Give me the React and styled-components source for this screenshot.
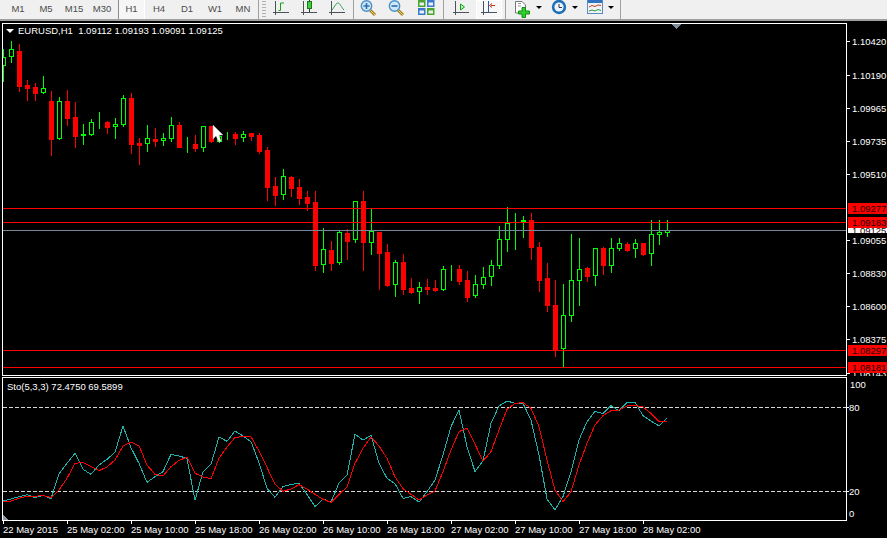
import styled, { createGlobalStyle } from "styled-components";

const GlobalStyle = createGlobalStyle`
  html, body {
    margin: 0;
    padding: 0;
    background: #000;
    overflow: hidden;
  }
`;

const FONT = `"Liberation Sans", Arial, sans-serif`;

// [high, low, bodyTop, bodyBottom, colour] per bar, one bar every 8px from x=3
const CANDLES = [
  [49, 81, 57, 65, "g"], [41, 62, 49, 56, "g"], [44, 91, 51, 86, "r"], [80, 100, 85, 88, "r"],
  [83, 100, 87, 93, "r"], [76, 93, 88, 92, "g"], [91, 155, 101, 139, "r"], [97, 139, 101, 138, "g"],
  [90, 125, 101, 118, "r"], [102, 147, 117, 136, "r"], [124, 144, 134, 135, "g"], [119, 135, 122, 134, "g"],
  [112, 128, 122, 122, "g"], [121, 133, 122, 127, "r"], [118, 138, 124, 126, "g"], [95, 126, 98, 124, "g"],
  [93, 153, 98, 144, "r"], [138, 164, 143, 145, "r"], [125, 151, 138, 143, "g"], [128, 146, 139, 141, "r"],
  [133, 145, 138, 140, "g"], [117, 141, 125, 138, "g"], [122, 147, 125, 147, "r"], [137, 152, 145, 145, "g"],
  [135, 151, 144, 148, "r"], [126, 151, 126, 147, "g"], [126, 142, 126, 141, "r"], [132, 142, 136, 141, "g"],
  [132, 139, 134, 134, "g"], [132, 144, 134, 138, "r"], [131, 141, 134, 137, "g"], [133, 140, 133, 136, "r"],
  [133, 153, 135, 151, "r"], [147, 200, 150, 187, "r"], [177, 205, 186, 195, "r"], [169, 199, 176, 194, "g"],
  [176, 196, 177, 188, "r"], [179, 204, 187, 198, "r"], [191, 210, 197, 203, "r"], [191, 270, 202, 265, "r"],
  [228, 272, 249, 264, "g"], [241, 270, 250, 263, "r"], [231, 264, 232, 262, "g"], [229, 259, 233, 241, "r"],
  [201, 242, 201, 239, "g"], [191, 270, 201, 242, "r"], [209, 254, 231, 242, "g"], [232, 289, 232, 253, "r"],
  [244, 286, 252, 285, "r"], [260, 296, 262, 284, "g"], [254, 294, 262, 289, "r"], [278, 293, 288, 292, "r"],
  [282, 303, 287, 291, "g"], [279, 294, 287, 289, "r"], [280, 291, 288, 290, "r"], [266, 290, 269, 289, "g"],
  [265, 280, 269, 269, "g"], [265, 284, 269, 281, "r"], [271, 301, 280, 297, "r"], [275, 297, 284, 295, "g"],
  [267, 288, 277, 284, "g"], [260, 285, 265, 276, "g"], [226, 268, 239, 265, "g"], [207, 251, 223, 239, "g"],
  [213, 249, 221, 221, "g"], [216, 237, 220, 222, "f"], [213, 259, 220, 247, "r"], [242, 291, 247, 280, "r"],
  [263, 311, 278, 305, "r"], [280, 356, 305, 350, "r"], [284, 367, 315, 348, "g"], [234, 321, 280, 315, "g"],
  [238, 305, 269, 280, "g"], [267, 281, 268, 276, "r"], [248, 285, 248, 275, "g"], [247, 274, 248, 265, "r"],
  [238, 272, 248, 265, "g"], [238, 250, 243, 248, "g"], [242, 251, 244, 250, "r"], [239, 257, 243, 248, "g"],
  [243, 255, 243, 254, "r"], [220, 265, 234, 253, "g"], [220, 244, 232, 234, "g"], [220, 236, 230, 232, "g"],
];

const TEAL = [
  378, 372, 365, 359, 368, 361, 371, 297, 265, 235, 283, 298, 270, 253, 232, 153, 218, 265, 322, 305, 290,
  238, 243, 250, 376, 290, 268, 186, 199, 168, 183, 200, 263, 340, 367, 335, 328, 325, 358, 395, 372, 381,
  324, 300, 178, 195, 181, 265, 310, 326, 370, 365, 381, 350, 315, 240, 155, 105, 215, 290, 258, 145, 93,
  78, 85, 85, 135, 240, 372, 404, 365, 290, 195, 140, 109, 116, 92, 107, 82, 82, 122, 138, 153, 129,
];

const SIGNAL = [
  381, 378, 370, 364, 364, 361, 368, 345, 310, 265, 262, 274, 287, 276, 255, 213, 202, 212, 270, 298, 303,
  275, 256, 247, 295, 306, 311, 250, 216, 187, 185, 185, 228, 277, 328, 349, 342, 329, 342, 358, 373, 382,
  358, 336, 265, 220, 186, 213, 250, 305, 341, 358, 375, 360, 348, 290, 225, 170, 160, 208, 258, 230, 165,
  103, 85, 83, 100, 155, 255, 345, 380, 350, 270, 205, 150, 122, 107, 105, 93, 91, 96, 115, 139, 139,
];

const PRICE_TICKS = [
  ["1.10420", 41], ["1.10190", 75], ["1.09965", 108], ["1.09735", 141], ["1.09510", 174],
  ["1.09055", 240], ["1.08830", 273], ["1.08600", 306], ["1.08375", 339], ["1.08143", 373],
];

const TAGS = [
  ["1.09125", 230, "#ffffff", 7],
  ["1.09277", 208, "#ff0000", 10],
  ["1.09183", 222, "#ff0000", 10],
  ["1.08297", 350, "#ff0000", 10],
  ["1.08181", 367, "#ff0000", 10],
];

const TIMES = [
  "22 May 2015", "25 May 02:00", "25 May 10:00", "25 May 18:00", "26 May 02:00", "26 May 10:00",
  "26 May 18:00", "27 May 02:00", "27 May 10:00", "27 May 18:00", "28 May 02:00",
];

const Page = styled.div`
  width: 887px;
  height: 538px;
  display: flex;
  flex-direction: column;
  background: #000;
  font-family: ${FONT};
  overflow: hidden;
`;

const Toolbar = styled.div`
  height: 19px;
  flex: none;
  display: flex;
  align-items: stretch;
  padding-left: 4px;
  background: #f0f0f0;
  border-bottom: 2px solid #a0a0a0;
`;

const Period = styled.div`
  width: ${(p) => (p.$active ? "25px" : "28px")};
  margin-left: ${(p) => (p.$active ? "2px" : "0")};
  padding-bottom: 3px;
  box-sizing: content-box;
  height: 16px;
  display: flex;
  align-items: center;
  justify-content: center;
  font-size: 9.5px;
  color: #4c4c4c;
  background: ${(p) => (p.$active ? "#f6f6f6" : "transparent")};
  border-left: ${(p) => (p.$active ? "1px solid #8c8c8c" : "none")};
  border-right: ${(p) => (p.$active ? "1px solid #fff" : "none")};
`;

const Separator = styled.div`
  width: 1px;
  flex: none;
  margin-left: ${(p) => p.$before}px;
  margin-right: ${(p) => p.$after}px;
  background: #a0a0a0;
`;

const Grip = styled.div`
  width: 4px;
  margin: 1px 1px 2px 3px;
  background: repeating-linear-gradient(#b0b0b0 0 1px, transparent 1px 3px);
`;

const ToolButton = styled.div`
  width: ${(p) => (p.$pressed ? "26px" : "28px")};
  margin: ${(p) => (p.$pressed ? "0 1px" : "0")};
  display: flex;
  align-items: flex-start;
  justify-content: center;
  background: ${(p) => (p.$pressed ? "#f8f8f8" : "transparent")};
  box-shadow: ${(p) => (p.$pressed ? "inset 0 0 0 1px #fff" : "none")};
`;

const DropButton = styled.div`
  width: 36px;
  padding-left: 4px;
  box-sizing: border-box;
  display: flex;
  align-items: flex-start;
`;

const DropIcon = styled.div`
  width: 22px;
  display: flex;
  justify-content: center;
`;

const Caret = styled.div`
  width: 0;
  height: 0;
  margin: 6px 0 0 2px;
  border-left: 3px solid transparent;
  border-right: 3px solid transparent;
  border-top: 3px solid #000;
`;

const ChartWindow = styled.div`
  flex: 1;
  display: flex;
  flex-direction: column;
  padding-top: 2px;
`;

const Pane = styled.div`
  position: relative;
  flex: none;
  height: ${(p) => p.$height}px;
  margin-bottom: ${(p) => p.$gap || 0}px;
`;

const PaneSvg = styled.svg`
  display: block;
  width: 887px;
  height: 100%;
`;

const Legend = styled.div`
  position: absolute;
  top: ${(p) => p.$top}px;
  left: ${(p) => p.$left}px;
  display: flex;
  align-items: center;
  gap: 4px;
  font-size: 9.5px;
  line-height: 11px;
  color: #fff;
  white-space: pre;
`;

const LegendMark = styled.span`
  width: 0;
  height: 0;
  border-left: 4px solid transparent;
  border-right: 4px solid transparent;
  border-top: 4px solid #fff;
`;

const AxisText = styled.text`
  font-family: ${FONT};
  font-size: 9.5px;
  fill: ${(p) => p.$fill || "#fff"};
`;

const TimeAxis = styled.div`
  display: flex;
  padding-left: 3px;
`;

const TimeCell = styled.div`
  width: 64px;
  flex: none;
  font-size: 9.5px;
  line-height: 11px;
  color: #fff;
  white-space: nowrap;
  text-indent: -0.6px;

  &::before {
    content: "";
    display: block;
    width: 1px;
    height: 3px;
    background: #fff;
  }
`;

const Axes = () => (
  <g stroke="#4a5458" strokeWidth="1" fill="none">
    <path d="M4.5 1V15M2 12.5H18" />
  </g>
);

const BarIcon = () => (
  <svg width="20" height="16" viewBox="0 0 20 16">
    <Axes />
    <path d="M7.5 10.5H9.5V3H13" stroke="#16a016" fill="none" />
  </svg>
);

const CandleIcon = () => (
  <svg width="20" height="16" viewBox="0 0 20 16">
    <Axes />
    <path d="M10.5 0V12" stroke="#333" />
    <rect x="8.5" y="1.5" width="4" height="7" fill="#3fd03f" stroke="#1a7a1a" />
  </svg>
);

const LineIcon = () => (
  <svg width="20" height="16" viewBox="0 0 20 16">
    <Axes />
    <path d="M5 10C8 6 9 3 11 3C13 3 14 7 17 10" stroke="#2c9a4a" fill="none" />
  </svg>
);

const ScrollIcon = () => (
  <svg width="20" height="16" viewBox="0 0 20 16">
    <Axes />
    <path d="M9.5 4V10L13.5 7Z" fill="#b8f0b8" stroke="#16a016" />
  </svg>
);

const ShiftIcon = () => (
  <svg width="20" height="16" viewBox="0 0 20 16">
    <Axes />
    <path d="M9.5 1V13" stroke="#2a5a9a" />
    <path d="M16 5.5H12M13 3.5L10.5 5.5L13 7.5" stroke="#c83010" fill="none" />
  </svg>
);

const Magnifier = ({ sign }) => (
  <svg width="20" height="17" viewBox="0 0 20 17">
    <path d="M9.5 9.5L15 15" stroke="#a08020" strokeWidth="3" />
    <path d="M10 10L15 15" stroke="#f0d060" />
    <circle cx="6.5" cy="6" r="5.2" fill="#cfe6f7" stroke="#4a90c8" strokeWidth="1.4" />
    <path d={sign === "+" ? "M3.5 6H9.5M6.5 3V9" : "M3.5 6H9.5"} stroke="#2a70b0" strokeWidth="1.6" />
  </svg>
);

const TileIcon = () => (
  <svg width="17" height="16" viewBox="0 0 17 16">
    {[
      [0, 0, "#4aa52e"],
      [9, 0, "#3a78d0"],
      [0, 8, "#3a78d0"],
      [9, 8, "#4aa52e"],
    ].map(([x, y, c]) => (
      <g key={`${x}-${y}`}>
        <rect x={x} y={y} width="7.5" height="7" fill={c} />
        <rect x={x + 1.5} y={y + 2.5} width="4.5" height="3" fill="#e8f0f0" />
      </g>
    ))}
  </svg>
);

const NewOrderIcon = () => (
  <svg width="18" height="18" viewBox="0 0 18 18">
    <path d="M1.5 1.5H8L11.5 5V13H1.5Z" fill="#fff" stroke="#777" />
    <path d="M4 3.5H7M4 6H7" stroke="#999" />
    <path d="M8 7.5H11.5V11H15.5V14H11.5V17.5H8V14H4.5V11H8Z" fill="#2dd02d" stroke="#158a15" />
  </svg>
);

const ClockIcon = () => (
  <svg width="18" height="16" viewBox="0 0 18 16">
    <circle cx="9" cy="7" r="7.2" fill="#1d6fb8" />
    <circle cx="9" cy="7" r="4.6" fill="#eef5fa" />
    <path d="M9 4V7.5H12" stroke="#334" fill="none" />
  </svg>
);

const TemplateIcon = () => (
  <svg width="17" height="15" viewBox="0 0 17 15">
    <rect x="0.5" y="0.5" width="15" height="13" fill="#eef3f8" stroke="#5a8ac0" />
    <rect x="1" y="0" width="14" height="3" fill="#2f72c0" />
    <path d="M2 7L5 5.5L8 6.5L11 5L14 5.5" stroke="#c83a20" fill="none" />
    <path d="M2 11L5 10L8 11L11 9.5L14 10.5" stroke="#2f9a3a" fill="none" />
  </svg>
);

const PERIODS = ["M1", "M5", "M15", "M30", "H1", "H4", "D1", "W1", "MN"];

const toPoints = (values) => values.map((v, i) => `${3 + 8 * i},${375 + v / 3}`).join(" ");

const Candle = ({ candle, x }) => {
  const [high, low, top, bottom, kind] = candle;
  const colour = kind === "r" ? "#ff0000" : "#00ff00";
  const solid = kind !== "g";
  return (
    <g>
      <rect x={x} y={high} width="1" height={low - high + 1} fill={colour} />
      {solid ? (
        <rect x={x - 2} y={top} width="5" height={bottom - top + 1} fill={colour} />
      ) : (
        <rect x={x - 1.5} y={top + 0.5} width="4" height={bottom - top} fill="#000" stroke={colour} />
      )}
    </g>
  );
};

const App = () => {
  return (
    <Page>
      <GlobalStyle />
      <Toolbar>
        {PERIODS.map((p) => (
          <Period key={p} $active={p === "H1"}>
            {p}
          </Period>
        ))}
        <Separator $before={1} $after={0} />
        <Grip />
        <ToolButton><BarIcon /></ToolButton>
        <ToolButton><CandleIcon /></ToolButton>
        <ToolButton><LineIcon /></ToolButton>
        <Separator $before={2} $after={2} />
        <ToolButton><Magnifier sign="+" /></ToolButton>
        <ToolButton><Magnifier sign="-" /></ToolButton>
        <ToolButton><TileIcon /></ToolButton>
        <Separator $before={3} $after={3} />
        <ToolButton><ScrollIcon /></ToolButton>
        <ToolButton $pressed><ShiftIcon /></ToolButton>
        <Separator $before={2} $after={2} />
        <DropButton><DropIcon><NewOrderIcon /></DropIcon><Caret /></DropButton>
        <DropButton><DropIcon><ClockIcon /></DropIcon><Caret /></DropButton>
        <DropButton><DropIcon><TemplateIcon /></DropIcon><Caret /></DropButton>
        <Separator $before={4} $after={0} />
      </Toolbar>

      <ChartWindow>
        <Pane $height={353} $gap={1}>
          <PaneSvg viewBox="0 23 887 353" shapeRendering="crispEdges">
            <defs>
              <clipPath id="plot">
                <rect x="3" y="24" width="843" height="351" />
              </clipPath>
            </defs>
            <g clipPath="url(#plot)">
              {CANDLES.map((c, i) => (
                <Candle key={i} candle={c} x={3 + 8 * i} />
              ))}
              {[208, 222, 350, 367].map((y) => (
                <rect key={y} x="3" y={y} width="843" height="1" fill="#ff0000" />
              ))}
              <rect x="3" y="230" width="843" height="1" fill="#778899" />
            </g>
            <path d="M2.5 23.5H846.5V375.5H2.5Z" fill="none" stroke="#fff" />
            <path d="M671 24H681L676 29Z" fill="#7f8c9c" />
            {PRICE_TICKS.map(([label, y]) => (
              <g key={label}>
                <rect x="847" y={y} width="3" height="1" fill="#fff" />
                <AxisText x="852" y={y + 3.5}>{label}</AxisText>
              </g>
            ))}
            {TAGS.map(([label, y, fill, h]) => (
              <g key={label}>
                <rect x="848" y={y - 5} width="39" height={h + 1} fill={fill} />
                <AxisText x="852" y={y + 3.5} $fill="#1a0606">{label}</AxisText>
              </g>
            ))}
            <path
              d="M213 125V139L216 136L219 142L221 141L219 135H223Z"
              fill="#fff"
              stroke="#b0b0b0"
              strokeWidth="0.5"
              shapeRendering="auto"
            />
          </PaneSvg>
          <Legend $top={2} $left={6}>
            <LegendMark />
            {"EURUSD,H1  1.09112 1.09193 1.09091 1.09125"}
          </Legend>
        </Pane>

        <Pane $height={144}>
          <PaneSvg viewBox="0 377 887 144" shapeRendering="crispEdges">
            <path d="M2.5 377.5H846.5V520.5H2.5Z" fill="none" stroke="#fff" />
            <path d="M3 407.5H846M3 491.5H846" stroke="#d8d8d8" strokeDasharray="4 2" />
            <polyline points={toPoints(TEAL)} fill="none" stroke="#20b2aa" />
            <polyline points={toPoints(SIGNAL)} fill="none" stroke="#ff0000" />
            <path d="M3 515L8 520H3Z" fill="#8e98a4" />
            {[407, 491].map((y) => (
              <rect key={y} x="847" y={y} width="2" height="1" fill="#fff" />
            ))}
            <AxisText x="850" y="388">100</AxisText>
            <AxisText x="849" y="411">80</AxisText>
            <AxisText x="849" y="495">20</AxisText>
            <AxisText x="849" y="517">0</AxisText>
          </PaneSvg>
          <Legend $top={4} $left={7}>Sto(5,3,3) 72.4750 69.5899</Legend>
        </Pane>

        <TimeAxis>
          {TIMES.map((t) => (
            <TimeCell key={t}>{t}</TimeCell>
          ))}
        </TimeAxis>
      </ChartWindow>
    </Page>
  );
};

export default App;
